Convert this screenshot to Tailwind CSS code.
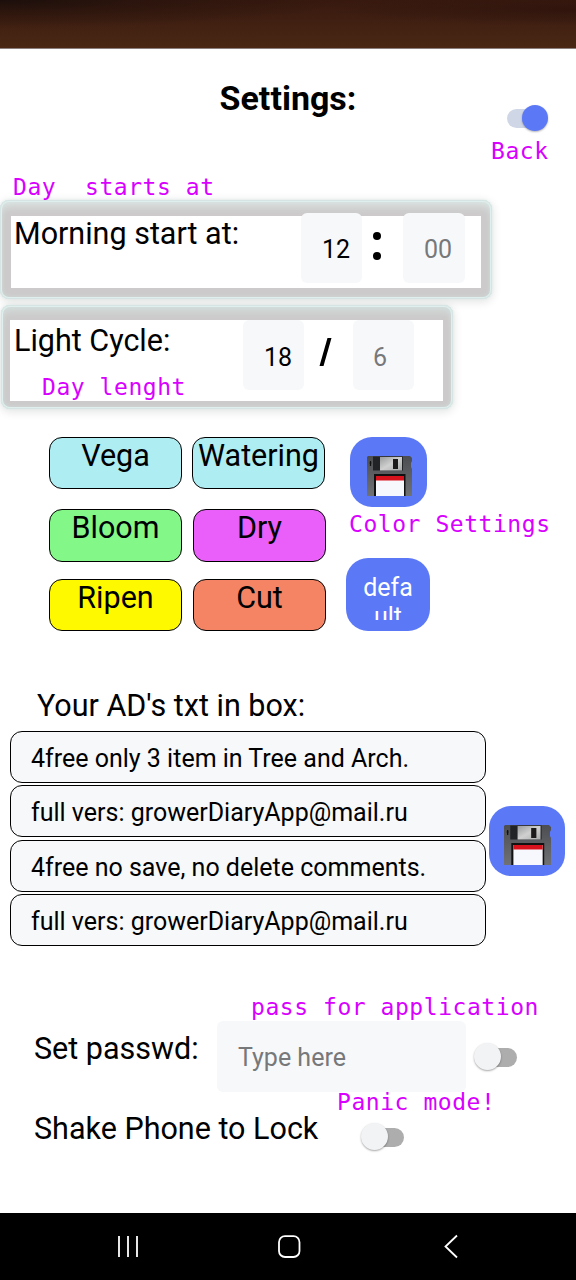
<!DOCTYPE html>
<html lang="en">
<head>
<meta charset="utf-8">
<title>Settings</title>
<script src="https://cdn.jsdelivr.net/npm/@tailwindcss/browser@4"></script>
</head>
<body class="w-[576px] h-[1280px] overflow-hidden bg-white text-black font-['Roboto',sans-serif]">
<svg class="absolute size-0">
  <defs>
    <linearGradient id="body" x1="0" y1="0" x2="0" y2="1"><stop offset="0" stop-color="#4b4d50"/><stop offset="1" stop-color="#707174"/></linearGradient>
    <linearGradient id="metal" x1="0" y1="0" x2="1" y2="1"><stop offset="0" stop-color="#999b9c"/><stop offset=".5" stop-color="#d0d0d0"/><stop offset="1" stop-color="#a9aaab"/></linearGradient>
    <symbol id="floppy" viewBox="0 0 45 40" preserveAspectRatio="none">
      <path d="M1 0H43L45 2V5L44 7V11L45 13V40H0V1Z" fill="url(#body)"/>
      <path d="M6 .5H36V14.500H6Z" fill="#222326"/>
      <path d="M13 1H35V14.500H13Z" fill="url(#metal)"/>
      <path d="M26 3H31V13H26Z" fill="#1d1a1b"/>
      <path d="M3.500 5V10M2.500 7H4.500" stroke="#111" stroke-width="1.200"/>
      <path d="M7 18H38.500V40H7Z" fill="#111"/>
      <path d="M9 20H37V40H9Z" fill="#f7f8fd"/>
      <path d="M9 20H37V24.500H9Z" fill="#d8121c"/>
    </symbol>
  </defs>
</svg>
<div class="relative flex flex-col h-[1280px]">
  <div class="h-[49px] shrink-0 border-b border-[#8a7f7c] bg-[radial-gradient(ellipse_at_0%_0%,#1c0f0b_0%,#24120c99_18%,transparent_42%),radial-gradient(ellipse_at_100%_20%,#2e130ccc_0%,transparent_30%),linear-gradient(to_bottom,#38190f,#4a2815)]"></div>

  <header class="relative h-[151px] shrink-0 flex justify-center">
    <h1 class="mt-[29px] h-[40px] leading-[40px] text-[34px] font-bold">Settings:</h1>
    <div class="absolute left-[507px] top-[56px] w-[41px] h-[27px] flex items-center">
      <span class="w-[36px] h-[19px] rounded-full bg-[#cfd6e6]"></span>
      <span class="absolute right-0 top-0 size-[26px] rounded-full bg-[#5b78f7] shadow-[0_1px_2px_#0000004d]"></span>
    </div>
    <span class="absolute left-[491px] top-[86px] leading-[32px] whitespace-pre text-[#d800ff] font-['DejaVu_Sans_Mono',monospace] text-[23px] tracking-[0.55px]">Back</span>
    <span class="absolute z-10 left-[13px] top-[122px] leading-[32px] whitespace-pre text-[#d800ff] font-['DejaVu_Sans_Mono',monospace] text-[23px] tracking-[0.55px]">Day  starts at</span>
  </header>

  <section class="h-[99px] shrink-0 w-[492px] rounded-[9px] pt-[16px] pl-[11px] pr-[11px] pb-[11px] bg-[#cccaca] shadow-[0_0_3px_#dcebe9,0_2px_10px_1px_#0000001c,inset_0_0_0_1px_#d6e5e3,inset_0_0_0_2px_#deefed,inset_0_9px_8px_-3px_#dbe5e3,inset_0_0_5px_2px_#cfdad8]">
    <div class="h-[72px] bg-white flex items-start pl-[3px]">
      <span class="mt-[2px] leading-[32px] text-[30.5px] w-[287px] shrink-0 whitespace-nowrap">Morning start at:</span>
      <div class="-mt-[3px] w-[61px] h-[70px] shrink-0 rounded-[6px] bg-[#f7f8fa] flex items-center pl-[21px] pt-[4px] text-[25px]">12</div>
      <div class="w-[41px] h-[70px] flex flex-col items-center gap-[12px] pt-[16px] pr-[12px]"><i class="size-[8px] rounded-full bg-black"></i><i class="size-[8px] rounded-full bg-black"></i></div>
      <div class="-mt-[3px] w-[62px] h-[70px] shrink-0 rounded-[6px] bg-[#f7f8fa] flex items-center pl-[21px] pt-[4px] text-[25px] text-[#77787a]">00</div>
    </div>
  </section>

  <section class="relative mt-[6px] h-[104px] ml-[1px] shrink-0 w-[452px] rounded-[9px] pt-[15px] pl-[9px] pr-[10px] pb-[8px] bg-[#cccaca] shadow-[0_0_3px_#dcebe9,0_2px_10px_1px_#0000001c,inset_0_0_0_1px_#d6e5e3,inset_0_0_0_2px_#deefed,inset_0_9px_8px_-3px_#d3dedc,inset_0_0_5px_2px_#cfdad8]">
    <div class="h-[81px] bg-white flex items-start pl-[4px]">
      <span class="mt-[5px] leading-[32px] text-[30.5px] w-[229px] shrink-0 whitespace-nowrap">Light Cycle:</span>
      <div class="w-[61px] h-[70px] shrink-0 rounded-[6px] bg-[#f7f8fa] flex items-center pl-[21px] pt-[5px] text-[25px]">18</div>
      <svg class="w-[49px] h-[70px] shrink-0" viewBox="0 0 49 70"><path d="M15.500 46L19.500 46L27.500 18H23.500Z"/></svg>
      <div class="w-[61px] h-[70px] shrink-0 rounded-[6px] bg-[#f7f8fa] flex items-center pl-[20px] pt-[5px] text-[25px] text-[#77787a]">6</div>
    </div>
    <span class="absolute left-[41px] top-[66px] leading-[32px] whitespace-pre text-[#d800ff] font-['DejaVu_Sans_Mono',monospace] text-[23px] tracking-[0.55px]">Day lenght</span>
  </section>

  <section class="relative mt-[28px] h-[195px] shrink-0 flex pl-[49px]">
    <div class="w-[277px] flex flex-col text-[30.5px] leading-[32px] text-center">
      <div class="flex gap-[10px] h-[72px]">
        <div class="w-[133px] h-[52px] pt-[2px] rounded-[13px] border-[1.5px] border-black bg-[#aeedf2]">Vega</div>
        <div class="w-[133px] h-[52px] pt-[2px] rounded-[13px] border-[1.5px] border-black bg-[#aeedf2]">Watering</div>
      </div>
      <div class="flex gap-[11px] h-[70px]">
        <div class="w-[133px] h-[53px] pt-[2px] rounded-[13px] border-[1.5px] border-black bg-[#83f788]">Bloom</div>
        <div class="w-[133px] h-[53px] pt-[2px] rounded-[13px] border-[1.5px] border-black bg-[#ea5ffa]">Dry</div>
      </div>
      <div class="flex gap-[11px]">
        <div class="w-[133px] h-[52px] pt-[2px] rounded-[13px] border-[1.5px] border-black bg-[#fff900]">Ripen</div>
        <div class="w-[133px] h-[52px] pt-[2px] rounded-[13px] border-[1.5px] border-black bg-[#f58464]">Cut</div>
      </div>
    </div>
    <div class="ml-[20px] w-[84px] flex flex-col">
      <div class="ml-[4px] w-[77px] h-[70px] rounded-[22px] bg-[#5b78f7] pt-[19px] pl-[17px]"><svg class="w-[45px] h-[40px]"><use href="#floppy"/></svg></div>
      <div class="mt-[51px] w-[84px] h-[73px] rounded-[22px] bg-[#5b78f7] pt-[15px] text-white text-[25px] leading-[29px] text-center">
        <div class="h-[47px] overflow-hidden">defa<br>ult</div>
      </div>
    </div>
    <span class="absolute left-[349px] top-[71px] leading-[32px] whitespace-pre text-[#d800ff] font-['DejaVu_Sans_Mono',monospace] text-[23px] tracking-[0.55px]">Color Settings</span>
  </section>

  <h2 class="mt-[58px] pl-[37px] h-[41px] shrink-0 leading-[32px] text-[30.5px]">Your AD's txt in box:</h2>
  <section class="h-[215px] shrink-0 flex items-start pl-[10px]">
    <div class="w-[476px] flex flex-col gap-[2.300px] text-[25px] leading-[50px]">
      <div class="h-[52px] rounded-[12px] border-[1.5px] border-black bg-[#f7f8fa] pl-[20px] pt-[2px]">4free only 3 item in Tree and Arch.</div>
      <div class="h-[52px] rounded-[12px] border-[1.5px] border-black bg-[#f7f8fa] pl-[20px] pt-[2px]">full vers: growerDiaryApp@mail.ru</div>
      <div class="h-[52px] rounded-[12px] border-[1.5px] border-black bg-[#f7f8fa] pl-[20px] pt-[2px]">4free no save, no delete comments.</div>
      <div class="h-[52px] rounded-[12px] border-[1.5px] border-black bg-[#f7f8fa] pl-[20px] pt-[2px]">full vers: growerDiaryApp@mail.ru</div>
    </div>
    <div class="ml-[3px] mt-[75px] w-[76px] h-[70px] rounded-[22px] bg-[#5b78f7] pt-[19px] pl-[15px]"><svg class="w-[47px] h-[40px]"><use href="#floppy"/></svg></div>
  </section>

  <section class="relative mt-[75px] h-[71px] shrink-0 flex pl-[34px]">
    <span class="w-[183px] mt-[12px] leading-[32px] text-[30.5px]">Set passwd:</span>
    <div class="w-[249px] h-[71px] rounded-[6px] bg-[#f7f8fa] pl-[21px] pt-[1px] leading-[71px] text-[25px] text-[#77787a]">Type here</div>
    <div class="relative ml-[8px] mt-[22px] w-[43px] h-[28px] flex items-center justify-end">
      <span class="w-[34px] h-[19px] rounded-full bg-[#adadad]"></span>
      <span class="absolute left-0 top-0 size-[27px] rounded-full bg-[#f2f3f5] shadow-[0_1px_2px_#00000059]"></span>
    </div>
    <span class="absolute left-[251px] -top-[30px] leading-[32px] whitespace-pre text-[#d800ff] font-['DejaVu_Sans_Mono',monospace] text-[23px] tracking-[0.55px]">pass for application</span>
  </section>
  <section class="relative h-[121px] shrink-0 flex pl-[34px]">
    <span class="w-[327px] mt-[21px] leading-[32px] text-[30.5px]">Shake Phone to Lock</span>
    <div class="relative mt-[31px] w-[43px] h-[28px] flex items-center justify-end">
      <span class="w-[34px] h-[19px] rounded-full bg-[#adadad]"></span>
      <span class="absolute left-0 top-0 size-[27px] rounded-full bg-[#f2f3f5] shadow-[0_1px_2px_#00000059]"></span>
    </div>
    <span class="absolute left-[337px] -top-[6px] leading-[32px] whitespace-pre text-[#d800ff] font-['DejaVu_Sans_Mono',monospace] text-[23px] tracking-[0.55px]">Panic mode!</span>
  </section>

  <nav class="mt-auto h-[67px] shrink-0 bg-black flex items-center">
    <svg class="w-full h-[67px]" viewBox="0 0 576 67" fill="none" stroke="#fff" stroke-width="1.800">
      <path d="M119 23V44M128 23V44M137 23V44"/>
      <rect x="279" y="23.200" width="20.500" height="20.800" rx="6"/>
      <path d="M457 22.500L445.500 33.500L457 44.500"/>
    </svg>
  </nav>
</div>
</body>
</html>
